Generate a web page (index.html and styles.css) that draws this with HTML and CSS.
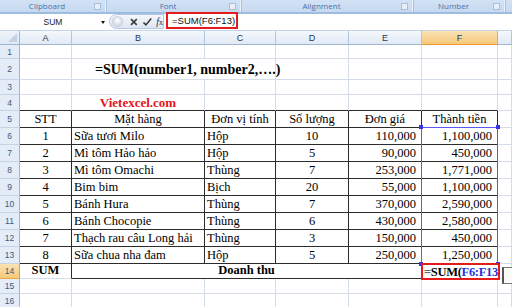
FILE: index.html
```html
<!DOCTYPE html>
<html>
<head>
<meta charset="utf-8">
<link rel="stylesheet" href="styles.css">
</head>
<body>
<div class="ribbon">
  <div class="grp g1"><span class="glabel">Clipboard</span><i class="launch"></i></div>
  <div class="grp g2"><span class="glabel">Font</span><i class="launch"></i></div>
  <div class="grp g3"><span class="glabel">Alignment</span><i class="launch"></i></div>
  <div class="grp g4"><span class="glabel">Number</span><i class="launch"></i></div>
  <div class="grp g5"></div>
</div>
<div class="fbar">
  <div class="namebox"><span class="nametext">SUM</span><span class="drop"></span></div>
  <div class="pill">
    <span class="dot"></span>
    <svg class="ico" width="10" height="10" viewBox="0 0 10 10"><path d="M2 2 L8 8 M8 2 L2 8" stroke="#3a3a3a" stroke-width="1.6" fill="none"/></svg>
    <svg class="ico" width="11" height="10" viewBox="0 0 11 10"><path d="M1.5 5.5 L4 8 L9.5 1.5" stroke="#3a3a3a" stroke-width="1.6" fill="none"/></svg>
    <span class="fx"><i>f</i><span class="fxx">x</span></span>
  </div>
  <div class="formula"><span class="fbox">=SUM(F6:F13)</span></div>
</div>
<div class="sheet">
  <!-- column headers -->
  <div class="corner"></div>
  <div class="ch">A</div><div class="ch">B</div><div class="ch">C</div><div class="ch">D</div><div class="ch">E</div><div class="ch sel">F</div><div class="ch"></div>

  <!-- row 1 -->
  <div class="rh">1</div><div class="c"></div><div class="c"></div><div class="c"></div><div class="c"></div><div class="c"></div><div class="c"></div><div class="c"></div>
  <!-- row 2 -->
  <div class="rh">2</div><div class="c"></div><div class="c span2 title">=SUM(number1, number2,….)</div><div class="c"></div><div class="c"></div><div class="c"></div><div class="c"></div>
  <!-- row 3 -->
  <div class="rh">3</div><div class="c"></div><div class="c"></div><div class="c"></div><div class="c"></div><div class="c"></div><div class="c"></div><div class="c"></div>
  <!-- row 4 -->
  <div class="rh">4</div><div class="c tb"></div><div class="c tb ctr site">Vietexcel.com</div><div class="c tb"></div><div class="c tb"></div><div class="c tb"></div><div class="c tb"></div><div class="c"></div>
  <!-- row 5 -->
  <div class="rh">5</div><div class="c t ctr">STT</div><div class="c t ctr">Mặt hàng</div><div class="c t ctr">Đơn vị tính</div><div class="c t ctr">Số lượng</div><div class="c t ctr">Đơn giá</div><div class="c t ctr">Thành tiền</div><div class="c"></div>
  <!-- row 6 -->
  <div class="rh">6</div><div class="c t ctr">1</div><div class="c t">Sữa tươi Milo</div><div class="c t">Hộp</div><div class="c t ctr">10</div><div class="c t rt">110,000</div><div class="c t rt">1,100,000</div><div class="c"></div>
  <!-- row 7 -->
  <div class="rh">7</div><div class="c t ctr">2</div><div class="c t">Mì tôm Hảo hảo</div><div class="c t">Hộp</div><div class="c t ctr">5</div><div class="c t rt">90,000</div><div class="c t rt">450,000</div><div class="c"></div>
  <!-- row 8 -->
  <div class="rh">8</div><div class="c t ctr">3</div><div class="c t">Mì tôm Omachi</div><div class="c t">Thùng</div><div class="c t ctr">7</div><div class="c t rt">253,000</div><div class="c t rt">1,771,000</div><div class="c"></div>
  <!-- row 9 -->
  <div class="rh">9</div><div class="c t ctr">4</div><div class="c t">Bim bim</div><div class="c t">Bịch</div><div class="c t ctr">20</div><div class="c t rt">55,000</div><div class="c t rt">1,100,000</div><div class="c"></div>
  <!-- row 10 -->
  <div class="rh">10</div><div class="c t ctr">5</div><div class="c t">Bánh Hura</div><div class="c t">Thùng</div><div class="c t ctr">7</div><div class="c t rt">370,000</div><div class="c t rt">2,590,000</div><div class="c"></div>
  <!-- row 11 -->
  <div class="rh">11</div><div class="c t ctr">6</div><div class="c t">Bánh Chocopie</div><div class="c t">Thùng</div><div class="c t ctr">6</div><div class="c t rt">430,000</div><div class="c t rt">2,580,000</div><div class="c"></div>
  <!-- row 12 -->
  <div class="rh">12</div><div class="c t ctr">7</div><div class="c t">Thạch rau câu Long hải</div><div class="c t">Thùng</div><div class="c t ctr">3</div><div class="c t rt">150,000</div><div class="c t rt">450,000</div><div class="c"></div>
  <!-- row 13 -->
  <div class="rh">13</div><div class="c t ctr">8</div><div class="c t">Sữa chua nha đam</div><div class="c t">Hộp</div><div class="c t ctr">5</div><div class="c t rt">250,000</div><div class="c t rt">1,250,000</div><div class="c"></div>
  <!-- row 14 -->
  <div class="rh sel">14</div><div class="c ar ctr b">SUM</div><div class="c span4 bb ctr b">Doanh thu</div><div class="c edit"><span class="eq">=</span>SUM(<span class="ref">F6:F13</span></div><div class="c"></div>
  <!-- row 15 -->
  <div class="rh">15</div><div class="c"></div><div class="c"></div><div class="c"></div><div class="c"></div><div class="c"></div><div class="c"></div><div class="c"></div>
  <!-- row 16 -->
  <div class="rh">16</div><div class="c"></div><div class="c"></div><div class="c"></div><div class="c"></div><div class="c"></div><div class="c"></div><div class="c"></div>

  <!-- referenced range highlight (overlay) -->
  <div class="range"><i class="h tl"></i><i class="h tr"></i><i class="h bl"></i><i class="h br"></i></div>
  <div class="tip"></div>
</div>
</body>
</html>
```
FILE: styles.css
```css
html, body {
  margin: 0;
  padding: 0;
  width: 512px;
  height: 307px;
  overflow: hidden;
  background: #ffffff;
}

/* ribbon group label strip */
.ribbon {
  display: flex;
  height: 12px;
  background: linear-gradient(#d3e2f5, #c6d9f0);
  border-bottom: 2px solid #9ebbe2;
  font-family: "Open Sans", "Liberation Sans", sans-serif;
  font-size: 8px;
  color: #4a70a8;
}
.grp {
  display: flex;
  align-items: center;
  box-sizing: border-box;
  border-right: 1px solid #a9c3e4;
  box-shadow: inset -1px 0 0 #eaf1fb;
}
.g1 { width: 107px; }
.g2 { width: 135px; }
.g3 { width: 172px; }
.g4 { width: 92px; }
.g5 { flex: 1; border-right: none; box-shadow: none; }
.glabel {
  flex: 1;
  text-align: center;
  line-height: 12px;
}
.launch {
  width: 5px;
  height: 5px;
  margin-right: 5px;
  border: 1px solid #a9bedb;
  background: #e8eef8;
}

/* formula bar */
.fbar {
  display: flex;
  height: 16px;
  background: #ffffff;
  border-bottom: 1px solid #c3d3e8;
  font-family: "Liberation Sans", Arial, sans-serif;
}
.namebox {
  width: 109px;
  display: flex;
  align-items: center;
}
.nametext {
  flex: 1;
  text-align: center;
  font-size: 8.5px;
  color: #222;
  padding-left: 5px;
}
.drop {
  width: 0;
  height: 0;
  border-left: 2.5px solid transparent;
  border-right: 2.5px solid transparent;
  border-top: 3px solid #111;
  margin-right: 4px;
}
.pill {
  width: 55px;
  height: 15px;
  display: flex;
  align-items: center;
  gap: 3px;
  box-sizing: border-box;
  border: 1px solid #b4c6de;
  border-radius: 8px 0 0 8px;
  background: linear-gradient(#f4f7fb, #dde6f2);
}
.dot {
  width: 9px;
  height: 9px;
  border-radius: 50%;
  margin-left: 2px;
  margin-right: 3px;
  background: radial-gradient(circle at 50% 40%, #ffffff, #c3ccd8);
  border: 1px solid #c8d2de;
}
.ico { display: block; }
.fx {
  font-family: "Liberation Serif", serif;
  font-size: 10px;
  color: #333;
  margin-left: 1px;
}
.fxx { font-size: 8px; }
.formula {
  flex: 1;
  display: flex;
  align-items: flex-start;
  padding-left: 2px;
}
.fbox {
  margin-top: -2px;
  width: 72px;
  height: 17px;
  box-sizing: border-box;
  border: 2px solid #e41b1b;
  font-size: 9.5px;
  line-height: 13px;
  padding-left: 4px;
  color: #111;
}

/* sheet grid */
.sheet {
  position: relative;
  display: grid;
  grid-template-columns: 20px 52px 133px 71px 73px 73px 76px 14px;
  grid-template-rows: 14px 14px 21px 15px 16px repeat(9, 17px) 15px 15px 15px;
  font-family: "Liberation Serif", "Times New Roman", serif;
  font-size: 12.5px;
  color: #000;
}
.corner {
  box-sizing: border-box;
  background: linear-gradient(#eef3fa, #dfe8f4);
  border-right: 1px solid #9eb6ce;
  border-bottom: 1px solid #9eb6ce;
  position: relative;
}
.corner::after {
  content: "";
  position: absolute;
  right: 2px;
  bottom: 2px;
  border-left: 9px solid transparent;
  border-bottom: 9px solid #c2d1e3;
}
.ch {
  box-sizing: border-box;
  background: linear-gradient(#f5f8fc, #e1e9f5);
  border-right: 1px solid #b1c5dc;
  border-bottom: 1px solid #9eb6ce;
  font-family: "Liberation Sans", Arial, sans-serif;
  font-size: 9px;
  color: #27384f;
  display: flex;
  align-items: center;
  justify-content: center;
}
.ch.sel {
  background: linear-gradient(#fae3b4, #f5c979);
  border-right-color: #f0a94a;
  border-bottom-color: #f29536;
}
.rh {
  box-sizing: border-box;
  background: #e4ecf7;
  border-right: 1px solid #9eb6ce;
  border-bottom: 1px solid #c4d3e6;
  font-family: "Liberation Sans", Arial, sans-serif;
  font-size: 8.5px;
  color: #3e5a7e;
  display: flex;
  align-items: center;
  justify-content: center;
}
.rh.sel {
  background: linear-gradient(#fae3b4, #f5c979);
  border-right-color: #f29536;
  border-bottom-color: #f0a94a;
}
.c {
  box-sizing: border-box;
  border-right: 1px solid #d5dde9;
  border-bottom: 1px solid #d5dde9;
  display: flex;
  align-items: flex-end;
  padding: 0 2px 0 2px;
  line-height: 15px;
  white-space: nowrap;
}
.t {
  border-right-color: #2b2b2b;
  border-bottom-color: #2b2b2b;
}
.tb { border-bottom-color: #2b2b2b; }
.ar { border-right-color: #2b2b2b; }
.bb { border-bottom-color: #2b2b2b; }
.ctr { justify-content: center; }
.rt { justify-content: flex-end; padding-right: 5px; }
.b { font-weight: bold; }
.span2 { grid-column: span 2; }
.span4 { grid-column: span 4; }

.title {
  font-weight: bold;
  font-size: 14px;
  padding-left: 23px;
  line-height: 19px;
}
.site {
  color: #e4141b;
  font-weight: bold;
  font-size: 13px;
}

.edit {
  border: 2px solid #e41b1b;
  margin: -1px -2px -1px -1px;
  font-weight: bold;
  font-size: 12.5px;
  letter-spacing: -0.3px;
  line-height: 14px;
  overflow: hidden;
  padding-left: 1px;
  align-items: center;
  position: relative;
  z-index: 3;
  background: #fff;
}
.eq { color: #666; }
.ref { color: #1d35e0; }

/* referenced-range border, overlaid on F6:F13 */
.range {
  position: absolute;
  left: 421px;
  top: 96px;
  width: 77px;
  height: 137px;
  box-sizing: border-box;
  border: 1px solid #5a5af0;
  z-index: 2;
  pointer-events: none;
}
.h {
  position: absolute;
  width: 4px;
  height: 4px;
  background: #3434e8;
}
.tl { left: -3px; top: -3px; }
.tr { right: -3px; top: -3px; }
.bl { left: -3px; bottom: -3px; }
.br { right: -3px; bottom: -3px; }

/* function ScreenTip, mostly off-screen */
.tip {
  position: absolute;
  left: 502px;
  top: 236px;
  width: 60px;
  height: 15px;
  border: 1px solid #767676;
  border-left: 2px solid #555;
  background: #fbfbf5;
  z-index: 4;
}
```
